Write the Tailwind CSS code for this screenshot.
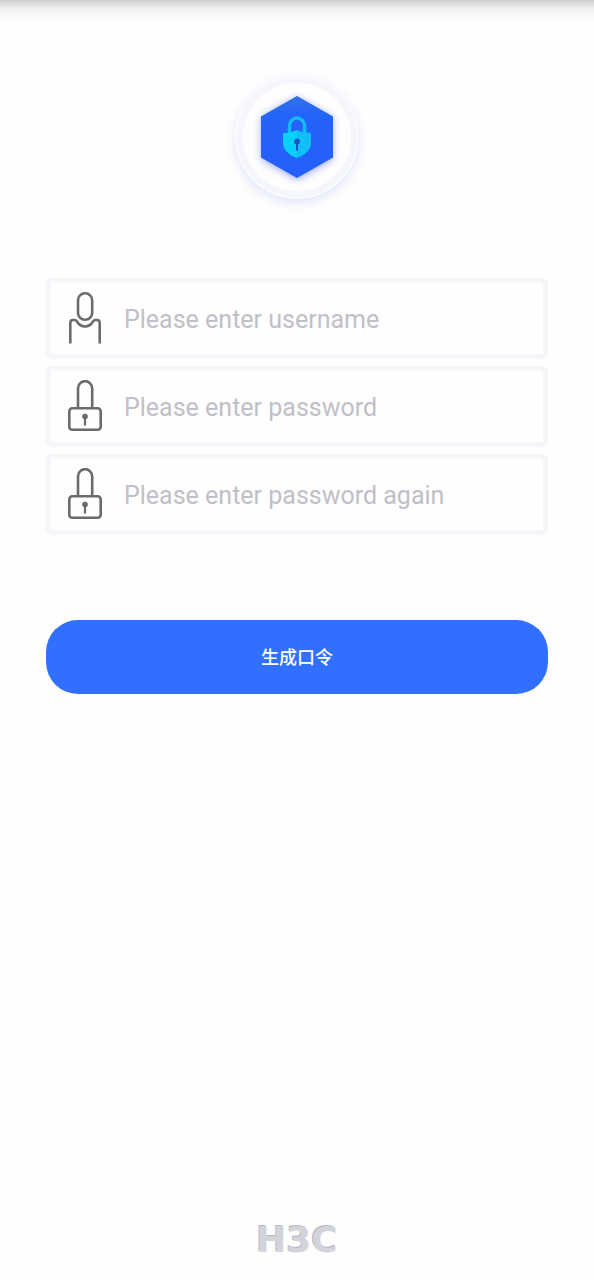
<!DOCTYPE html>
<html lang="zh-CN">
<head>
<meta charset="utf-8">
<meta name="viewport" content="width=device-width, initial-scale=1">
<title>H3C</title>
<script src="https://cdn.jsdelivr.net/npm/@tailwindcss/browser@4"></script>
</head>
<body class="min-h-screen flex flex-col bg-[#fefefe] font-['Roboto','Noto_Sans_CJK_SC',sans-serif]">
<div class="h-5 bg-linear-to-b from-[#cfcfcf] via-[#eeeeee] via-40% to-[#fefefe]"></div>
<main class="flex flex-1 flex-col px-[46px] pt-10">
  <svg class="mx-auto h-[154px] w-[154px] overflow-visible" viewBox="0 0 154 154" aria-hidden="true">
    <defs>
      <filter id="halo" x="-20%" y="-20%" width="140%" height="140%"><feGaussianBlur stdDeviation="6"/></filter>
      <filter id="glow" x="-20%" y="-20%" width="140%" height="140%"><feGaussianBlur stdDeviation="4"/></filter>
      <linearGradient id="face" x1="0" y1="0" x2="0" y2="1"><stop offset="0" stop-color="#3274ee"/><stop offset=".22" stop-color="#2463f8"/><stop offset="1" stop-color="#2460fc"/></linearGradient>
    </defs>
    <circle cx="77" cy="81" r="61" fill="#dcdff8" filter="url(#halo)"/>
    <circle cx="77" cy="77" r="62" fill="#fafbff"/>
    <circle cx="77" cy="77" r="57" fill="none" stroke="#f5f6fc" stroke-width="6"/>
    <circle cx="77" cy="77" r="54" fill="#fefefe"/>
    <path d="M77 38 112 58V99L77 119 42 99V58Z" fill="#7080f8" opacity=".8" filter="url(#glow)"/>
    <path d="M77 36 113 56.500V97.500L77 118 41 97.500V56.500Z" fill="url(#face)"/>
    <path d="M42 57.500 77 38 112 57.500" fill="none" stroke="#2b70dc" stroke-width="2" opacity=".4"/>
    <path d="M69.500 74V66a7.500 8 0 0 1 15 0v8" fill="none" stroke="#11bcf5" stroke-width="3.500"/>
    <path d="M77 70C73 72 68 73 63 73V83C63 90 69 95 77 98Z" fill="#08d0fb"/>
    <path d="M77 70C81 72 86 73 91 73V83C91 90 85 95 77 98Z" fill="#12bef7"/>
    <circle cx="77" cy="81.500" r="3" fill="#1757c2"/>
    <path d="M77 82v8" stroke="#1757c2" stroke-width="2" stroke-linecap="round"/>
  </svg>

  <form class="mt-16 flex flex-col">
    <div class="flex flex-col gap-[7px]">
      <label class="flex h-[81px] items-center gap-[22px] rounded-md border-5 border-[#f5f5fa] bg-[#fefefe] px-[17px] pb-0.5">
        <svg class="h-[52px] w-[34px] shrink-0" viewBox="0 0 34 52" fill="none" stroke="#6b6b6b" stroke-width="2.600" aria-hidden="true">
          <rect x="10" y="1.300" width="14.200" height="26.500" rx="7"/>
          <path d="M2.300 51.500V31Q2.300 28 5 28H6.500Q8 28 9 29.500Q12 34.500 17 34.500T25 29.500Q26 28 27.500 28H29Q31.700 28 31.700 31V51.500"/>
        </svg>
        <input type="text" aria-label="Username" placeholder="Please enter username" class="min-w-0 flex-1 bg-transparent pt-1 text-[25px] text-[#555555] outline-none placeholder:text-[#c0c0c8]">
      </label>
      <label class="flex h-[81px] items-center gap-[22px] rounded-md border-5 border-[#f5f5fa] bg-[#fefefe] px-[17px] pb-0.5">
        <svg class="h-[52px] w-[34px] shrink-0" viewBox="0 0 34 52" fill="none" stroke="#6b6b6b" stroke-width="2.600" aria-hidden="true">
          <path d="M10 28V8.500a7 7.200 0 0 1 14.200 0V28"/>
          <rect x="1.300" y="28.300" width="31.400" height="21.400" rx="3"/>
          <circle cx="17" cy="36.500" r="2.800" fill="#6b6b6b" stroke="none"/>
          <path d="M17 37v8.500" stroke-width="2.200"/>
        </svg>
        <input type="password" aria-label="Password" placeholder="Please enter password" class="min-w-0 flex-1 bg-transparent pt-1 text-[25px] text-[#555555] outline-none placeholder:text-[#c0c0c8]">
      </label>
      <label class="flex h-[81px] items-center gap-[22px] rounded-md border-5 border-[#f5f5fa] bg-[#fefefe] px-[17px] pb-0.5">
        <svg class="h-[52px] w-[34px] shrink-0" viewBox="0 0 34 52" fill="none" stroke="#6b6b6b" stroke-width="2.600" aria-hidden="true">
          <path d="M10 28V8.500a7 7.200 0 0 1 14.200 0V28"/>
          <rect x="1.300" y="28.300" width="31.400" height="21.400" rx="3"/>
          <circle cx="17" cy="36.500" r="2.800" fill="#6b6b6b" stroke="none"/>
          <path d="M17 37v8.500" stroke-width="2.200"/>
        </svg>
        <input type="password" aria-label="Password again" placeholder="Please enter password again" class="min-w-0 flex-1 bg-transparent pt-1 text-[25px] text-[#555555] outline-none placeholder:text-[#c0c0c8]">
      </label>
    </div>
    <button type="button" class="mt-[85px] h-[74px] rounded-[32px] bg-[#3170ff] pt-0.5 text-lg font-medium text-white">生成口令</button>
  </form>
  <footer class="mt-auto pb-6 text-center font-['DejaVu_Sans'] text-[36px] leading-8 font-bold text-[#d3d3dc] [text-shadow:-1px_-1px_0_#b8b8c0]">H3C</footer>
</main>
</body>
</html>
